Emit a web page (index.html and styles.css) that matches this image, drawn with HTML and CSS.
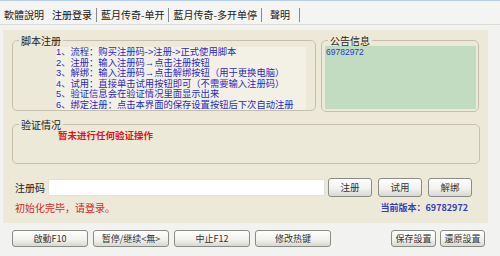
FILE: index.html
```html
<!DOCTYPE html>
<html lang="zh">
<head>
  <meta charset="UTF-8">
  <title>注册登录</title>
  <link rel="stylesheet" href="styles.css">
</head>
<body>
  <div class="window">
    <div class="tabs">
      <span class="tab">軟體說明</span>
      <span class="tab active sep">注册登录</span>
      <span class="tab sep">藍月传奇-单开</span>
      <span class="tab sep">藍月传奇-多开单停</span>
      <span class="tab sep wide">聲明</span>
    </div>

    <div class="panel">
      <div class="top-row">
        <fieldset class="group script-group">
          <legend>脚本注册</legend>
          <div class="steps">
            <div>1、流程：购买注册码-&gt;注册-&gt;正式使用脚本</div>
            <div>2、注册：输入注册码→点击注册按钮</div>
            <div>3、解绑：输入注册码→点击解绑按钮（用于更换电脑）</div>
            <div>4、试用：直接单击试用按钮即可（不需要输入注册码）</div>
            <div>5、验证信息会在验证情况里面显示出来</div>
            <div>6、绑定注册：点击本界面的保存设置按钮后下次自动注册</div>
          </div>
        </fieldset>
        <fieldset class="group notice-group">
          <legend>公告信息</legend>
          <div class="notice">69782972</div>
        </fieldset>
      </div>

      <fieldset class="group verify-group">
        <legend>验证情况</legend>
        <div class="verify-msg">暂未进行任何验证操作</div>
      </fieldset>

      <div class="code-row">
        <label class="code-label" for="code">注册码</label>
        <input type="text" id="code" class="code-input">
        <button class="btn small">注册</button>
        <button class="btn small">试用</button>
        <button class="btn small">解绑</button>
      </div>

      <div class="status-row">
        <span class="status">初始化完毕，请登录。</span>
        <span class="version">当前版本：69782972</span>
      </div>
    </div>

    <div class="bottom-bar">
      <button class="btn wide-btn">啟動F10</button>
      <button class="btn wide-btn">暂停/继续&lt;無&gt;</button>
      <button class="btn wide-btn">中止F12</button>
      <button class="btn wide-btn">修改热键</button>
      <span class="spacer"></span>
      <button class="btn mid-btn">保存設置</button>
      <button class="btn mid-btn">還原設置</button>
    </div>
  </div>
</body>
</html>
```

FILE: styles.css
```css
body {
  margin: 0;
  padding: 0;
  font-family: "Noto Sans CJK SC", "Noto Sans", sans-serif;
  font-size: 10px;
  background-color: #f2f2f0;
  color: #222;
}

.window {
  width: 500px;
  height: 256px;
  overflow: hidden;
  border-top: 1px solid #b9cde6;
  box-sizing: border-box;
}

.tabs {
  display: flex;
  align-items: flex-end;
  height: 24px;
  padding-bottom: 2px;
  border-bottom: 1px solid #dcdcd8;
  background-color: #f4f4f2;
  box-sizing: border-box;
}

.tab {
  padding: 0 4px;
  line-height: 14px;
  color: #222;
}

.tab.sep {
  border-right: 1px solid #8a8a8a;
}

.tab.active {
  color: #111;
}

.tab.wide {
  padding: 0 9px 0 8px;
}

.panel {
  margin: 5px 12px 0 3px;
  height: 193px;
  padding: 5px 0 0 9px;
  box-sizing: border-box;
  background-color: #ece9d8;
}

.top-row {
  display: flex;
  gap: 5px;
}

.group {
  margin: 0;
  padding: 0;
  border: 1px solid #c4c0ad;
  border-radius: 5px;
  box-sizing: border-box;
}

.group legend {
  padding: 0 2px;
  margin-left: 6px;
  line-height: 11px;
  font-size: 10px;
  color: #222;
}

.script-group {
  width: 304px;
  height: 76px;
}

.steps {
  margin: 1px 0 0 43px;
  width: 250px;
  font-family: "Liberation Sans", "Noto Sans CJK SC", sans-serif;
  font-size: 9.3px;
  line-height: 10.5px;
  white-space: nowrap;
  color: #2a2ac4;
  background-color: #f3f1e5;
}

.notice-group {
  width: 158px;
  height: 77px;
}

.notice {
  margin: 0 2px 0 3px;
  height: 63px;
  padding: 1px 0 0 1px;
  box-sizing: border-box;
  background-color: #c1dcc0;
  color: #2a3ac8;
  font-family: "Liberation Sans", sans-serif;
  font-size: 8.5px;
  line-height: 10px;
}

.verify-group {
  width: 468px;
  height: 45px;
  margin-top: 7px;
}

.verify-msg {
  margin: 0 0 0 45px;
  color: #e0161a;
  font-weight: bold;
  font-size: 9.5px;
  line-height: 11px;
}

.code-row {
  display: flex;
  align-items: center;
  margin-top: 14px;
  margin-left: 3px;
}

.code-label {
  width: 33px;
  color: #222;
}

.code-input {
  width: 277px;
  height: 17px;
  margin: 0 3px 0 0;
  padding: 0;
  border: 1px solid #e4e2d6;
  background-color: #fff;
  box-sizing: border-box;
}

.btn {
  font-family: "Noto Sans CJK SC", "Noto Sans", sans-serif;
  font-size: 9.5px;
  color: #333;
  padding: 0;
  border: 1px solid #8c8c86;
  border-radius: 3px;
  background: linear-gradient(#ffffff, #f0f0ec 60%, #d8d8d2);
  box-sizing: border-box;
  line-height: 13px;
}

.btn.small {
  width: 44px;
  height: 19px;
  margin-right: 6px;
}

.status-row {
  display: flex;
  justify-content: space-between;
  margin: 5px 0 0 3px;
  width: 453px;
  line-height: 12px;
}

.status {
  color: #d42a2a;
}

.version {
  color: #3040c0;
  font-weight: bold;
  font-size: 9px;
}

.bottom-bar {
  display: flex;
  align-items: center;
  padding: 7px 0 0 12px;
}

.wide-btn {
  width: 76px;
  height: 17px;
  margin-right: 5px;
  font-size: 9px;
}

.spacer {
  width: 55px;
}

.mid-btn {
  width: 45px;
  height: 17px;
  margin-right: 4px;
  font-size: 9px;
}
```
